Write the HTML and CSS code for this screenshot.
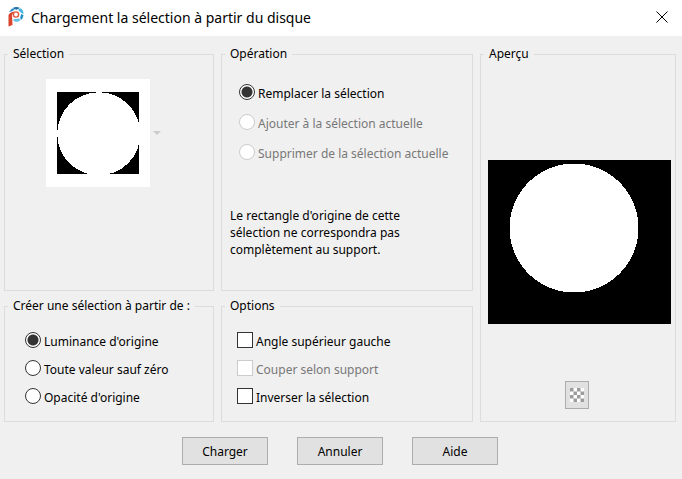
FILE: index.html
```
<!DOCTYPE html>
<html lang="fr">
<head>
<meta charset="UTF-8">
<title>Chargement la sélection à partir du disque</title>
<link rel="stylesheet" href="styles.css">
</head>
<body>
  <header class="titre">
    <svg class="logo" viewBox="0 0 16 20" aria-hidden="true">
      <path d="M1 5 L4 1.500 L7 2.500 L3.500 4.500 Z" fill="#2a8fc4"/>
      <path d="M4.500 1.200 Q8 -1 12 1 L8.500 2.800 Z" fill="#1c6ea4"/>
      <path d="M12.500 1.300 Q15.500 3 15.500 7 L12.800 5.500 L10 2.800 Z" fill="#45b5e0"/>
      <path d="M15.500 8 Q15.500 11 12.800 13.300 L12.200 10.500 L13.200 7 Z" fill="#2492c8"/>
      <path d="M12 13.800 Q9 15.500 5.500 14 L5.500 12.200 L11.500 11.500 Z" fill="#5cc3e6"/>
      <path d="M.5 8 Q2 5 6 4.500 L4 8 L4.500 18 L.5 19.500 Z" fill="#d8452c"/>
      <circle cx="8" cy="7.500" r="2.600" fill="#fff" stroke="#e2563c" stroke-width="1.400"/>
    </svg>
    <h1>Chargement la sélection à partir du disque</h1>
    <button type="button" class="fermer" aria-label="Fermer">
      <svg viewBox="0 0 12 12" aria-hidden="true"><path d="M.5 .5 L11.500 11.500 M11.500 .5 L.5 11.500"/></svg>
    </button>
  </header>

  <form>
    <div class="groupes">
      <fieldset>
        <legend>Sélection</legend>
        <button type="button" class="choix" aria-label="Choisir une sélection" disabled>
          <svg class="vignette" viewBox="0 0 104 108">
            <rect width="104" height="108" fill="#fff"/>
            <rect x="11" y="13" width="82" height="82"/>
            <circle cx="52.800" cy="54.800" r="41.600" fill="#fff"/>
          </svg>
          <svg class="fleche" viewBox="0 0 8 4"><path d="M0 0 H8 L4 4 Z"/></svg>
        </button>
      </fieldset>

      <fieldset class="operation">
        <legend>Opération</legend>
        <label><input type="radio" name="operation" checked><span>Remplacer la sélection</span></label>
        <label class="inactif"><input type="radio" name="operation" disabled><span>Ajouter à la sélection actuelle</span></label>
        <label class="inactif"><input type="radio" name="operation" disabled><span>Supprimer de la sélection actuelle</span></label>
        <p>Le rectangle d'origine de cette sélection ne correspondra pas complètement au support.</p>
      </fieldset>

      <fieldset class="apercu">
        <legend>Aperçu</legend>
        <svg class="image" viewBox="0 0 183 164">
          <rect width="183" height="164"/>
          <circle cx="86" cy="68" r="64.500" fill="#fff"/>
        </svg>
        <button type="button" class="damier" aria-label="Afficher la transparence">
          <svg viewBox="0 0 4 4">
            <rect width="4" height="4" fill="#fff"/>
            <path fill="#9c9c9c" d="M0 0h1v1h-1z M2 0h1v1h-1z M1 1h1v1h-1z M3 1h1v1h-1z M0 2h1v1h-1z M2 2h1v1h-1z M1 3h1v1h-1z M3 3h1v1h-1z"/>
          </svg>
        </button>
      </fieldset>

      <fieldset class="source">
        <legend>Créer une sélection à partir de :</legend>
        <label><input type="radio" name="source" checked><span>Luminance d'origine</span></label>
        <label><input type="radio" name="source"><span>Toute valeur sauf zéro</span></label>
        <label><input type="radio" name="source"><span>Opacité d'origine</span></label>
      </fieldset>

      <fieldset class="options">
        <legend>Options</legend>
        <label><input type="checkbox"><span>Angle supérieur gauche</span></label>
        <label class="inactif"><input type="checkbox" disabled><span>Couper selon support</span></label>
        <label><input type="checkbox"><span>Inverser la sélection</span></label>
      </fieldset>
    </div>

    <div class="boutons">
      <button type="submit">Charger</button>
      <button type="button">Annuler</button>
      <button type="button">Aide</button>
    </div>
  </form>
</body>
</html>
```
FILE: styles.css
```
* {
  box-sizing: border-box;
}
body {
  margin: 0;
  background: #f0f0f0;
  color: #000;
  font: 12px/17px "Noto Sans", "Open Sans", sans-serif;
}
button, input {
  font: inherit;
  color: inherit;
  margin: 0;
}
svg {
  display: block;
}

/* barre de titre */
.titre {
  display: flex;
  align-items: center;
  height: 36px;
  padding: 0 14px 2px 8px;
  background: #fff;
}
.logo {
  width: 16px;
  height: 20px;
}
.titre h1 {
  flex: 1;
  margin: 0 0 0 7px;
  font-size: 14px;
  font-weight: normal;
}
.fermer {
  padding: 0;
  border: 0;
  background: none;
}
.fermer svg {
  width: 12px;
  height: 12px;
  stroke: #000;
}

/* groupes */
.groupes {
  display: grid;
  grid-template-columns: 210fr 252fr 196fr;
  gap: 7px;
  padding: 10px 6px 0 4px;
}
fieldset {
  min-width: 0;
  margin: 0;
  padding: 0 8px;
  border: 1px solid #dcdcdc;
}
legend {
  margin-left: -5px;
  padding: 0 5px;
  line-height: 16px;
}
.choix {
  display: flex;
  align-items: center;
  gap: 3px;
  margin: 17px 0 0 33px;
  padding: 0;
  border: 0;
  background: none;
}
.vignette {
  width: 104px;
  height: 108px;
  shape-rendering: crispEdges;
}
.fleche {
  width: 8px;
  height: 4px;
  fill: #ccc;
}

label {
  display: flex;
  align-items: center;
  gap: 3px;
  height: 28px;
}
label span {
  padding-top: 2px;
}
.inactif {
  color: #787878;
}
.operation label {
  height: 30px;
  margin-left: 9px;
}
.operation legend + label {
  margin-top: 15px;
}
.operation p {
  max-width: 190px;
  margin: 40px 0 32px;
}
.source, .options {
  padding-bottom: 11px;
}
.source legend + label, .options legend + label {
  margin-top: 12px;
}
.source label {
  margin-left: 12px;
}
.options label {
  margin-left: 7px;
}

input {
  appearance: none;
  width: 16px;
  height: 16px;
  border: 1px solid #333;
  background: #fff;
}
input[type="radio"] {
  border-radius: 50%;
}
input[type="radio"]:checked {
  background: radial-gradient(circle, #333 5px, #fff 6px);
}
input:disabled {
  border-color: #ccc;
}

.apercu {
  grid-column: 3;
  grid-row: 1 / 3;
  padding: 0 4px 0 7px;
}
.apercu legend {
  margin-left: -4px;
}
.image {
  width: 100%;
  margin-top: 98px;
  shape-rendering: crispEdges;
}
.damier {
  display: block;
  margin: 57px auto 12px 77px;
  padding: 6px 4px;
  border: 1px solid #adadad;
  background: #e1e1e1;
}
.damier svg {
  width: 14px;
  height: 14px;
}

.boutons {
  display: flex;
  justify-content: center;
  gap: 29px;
  padding: 15px 2px 14px 0;
}
.boutons button {
  width: 86px;
  height: 28px;
  padding: 0;
  border: 1px solid #adadad;
  background: #e1e1e1;
}
```
